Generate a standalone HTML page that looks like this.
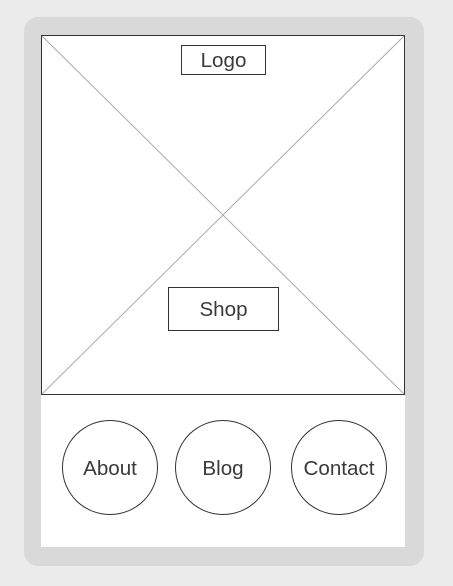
<!DOCTYPE html>
<html><head><style>
body{margin:0;width:453px;height:586px;background:#ebebeb;position:relative;font-family:"Liberation Sans",sans-serif;overflow:hidden}
.frame{position:absolute;left:24px;top:17px;width:400px;height:549px;background:#d9d9d9;border-radius:14px}
.inner{position:absolute;left:41px;top:35px;width:364px;height:512px;background:#fff}
.box{position:absolute;border:1px solid #333;box-sizing:border-box;display:flex;align-items:center;justify-content:center;color:#3a3a3a;font-size:20.6px;background:#fff;padding-top:2px}
.c{border-radius:50%}
</style></head><body>
<div class="frame"></div>
<div class="inner"></div>
<svg style="position:absolute;left:0;top:0" width="453" height="586">
<rect x="41.5" y="35.5" width="363" height="359" fill="none" stroke="#333" stroke-width="1"/>
<line x1="42" y1="36" x2="404" y2="394" stroke="#aaa"/>
<line x1="404" y1="36" x2="42" y2="394" stroke="#aaa"/>
</svg>
<div class="box" style="left:181px;top:45px;width:85px;height:30px">Logo</div>
<div class="box" style="left:168px;top:287px;width:111px;height:44px">Shop</div>
<div class="box c" style="left:62px;top:420px;width:96px;height:95px">About</div>
<div class="box c" style="left:175px;top:420px;width:96px;height:95px">Blog</div>
<div class="box c" style="left:291px;top:420px;width:96px;height:95px">Contact</div>
</body></html>
